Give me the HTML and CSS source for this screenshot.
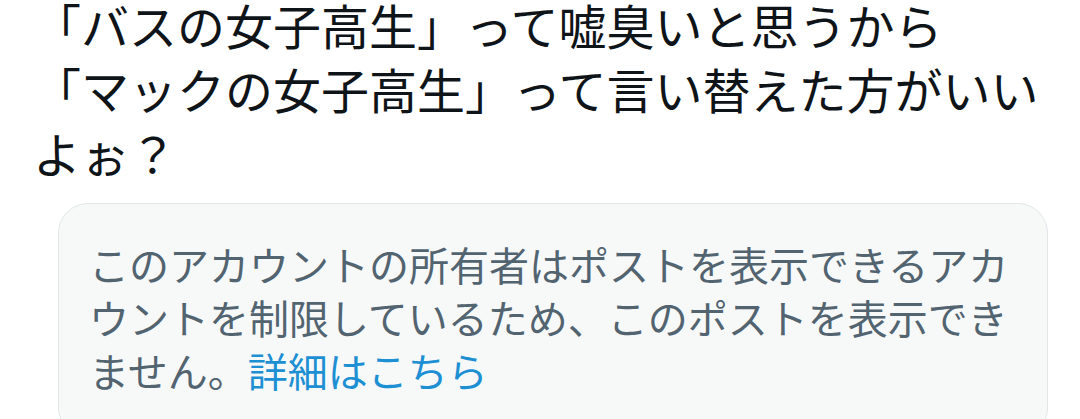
FILE: index.html
```html
<!DOCTYPE html>
<html lang="ja">
<head>
    <meta charset="UTF-8">
    <meta name="viewport" content="width=device-width, initial-scale=1.0">
    <title>ポスト</title>
    <link rel="stylesheet" href="styles.css">
</head>
<body>
    <div class="tweet">
        <p class="tweet-text">「バスの女子高生」って嘘臭いと思うから<br>「マックの女子高生」って言い替えた方がいいよぉ？</p>
        <div class="notice">
            <p class="notice-text">このアカウントの所有者はポストを表示できるアカウントを制限しているため、このポストを表示できません。<a href="#" class="notice-link">詳細はこちら</a></p>
        </div>
    </div>
</body>
</html>
```

FILE: styles.css
```css
body {
    font-family: "Noto Sans CJK JP", "Noto Sans", sans-serif;
    background-color: #fff;
    margin: 0;
    padding: 0;
    overflow: hidden;
}

.tweet {
    padding: 0 32px 0 33px;
}

.tweet-text {
    margin: -8px 0 19px;
    font-size: 48px;
    line-height: 64px;
    color: #0f1419;
    width: 1012px;
}

.notice {
    margin-left: 25px;
    width: 990px;
    background-color: #f7f9f9;
    border: 1px solid #e1e6e8;
    border-radius: 30px;
    padding: 34px 30px 40px 30px;
    box-sizing: border-box;
}

.notice-text {
    margin: 0;
    font-size: 40px;
    line-height: 53px;
    color: #536471;
}

.notice-link {
    color: #1d8fd3;
    text-decoration: none;
}
```
